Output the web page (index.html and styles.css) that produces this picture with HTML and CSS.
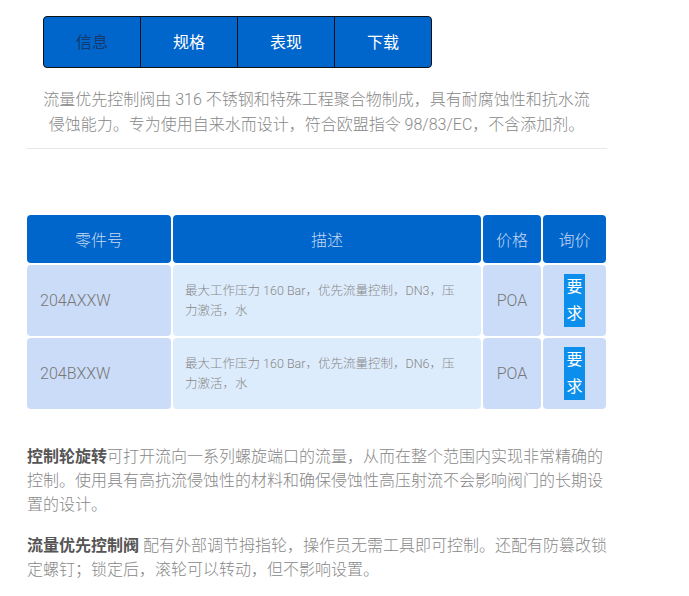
FILE: index.html
```html
<!DOCTYPE html>
<html lang="zh">
<head>
<meta charset="utf-8">
<title>流量优先控制阀</title>
<link rel="stylesheet" href="styles.css">
</head>
<body>
<div class="page">
  <nav class="tabs">
    <div class="tab active">信息</div>
    <div class="tab">规格</div>
    <div class="tab">表现</div>
    <div class="tab">下载</div>
  </nav>
  <p class="intro">流量优先控制阀由 316 不锈钢和特殊工程聚合物制成，具有耐腐蚀性和抗水流侵蚀能力。专为使用自来水而设计，符合欧盟指令 98/83/EC，不含添加剂。</p>
  <hr class="rule">
  <table class="parts">
    <thead>
      <tr>
        <th class="c-part">零件号</th>
        <th class="c-desc">描述</th>
        <th class="c-price">价格</th>
        <th class="c-ask">询价</th>
      </tr>
    </thead>
    <tbody>
      <tr>
        <td class="c-part">204AXXW</td>
        <td class="c-desc">最大工作压力 160 Bar，优先流量控制，DN3，压力激活，水</td>
        <td class="c-price">POA</td>
        <td class="c-ask"><span class="req">要求</span></td>
      </tr>
      <tr>
        <td class="c-part">204BXXW</td>
        <td class="c-desc">最大工作压力 160 Bar，优先流量控制，DN6，压力激活，水</td>
        <td class="c-price">POA</td>
        <td class="c-ask"><span class="req">要求</span></td>
      </tr>
    </tbody>
  </table>
  <p class="body-text"><strong>控制轮旋转</strong>可打开流向一系列螺旋端口的流量，从而在整个范围内实现非常精确的控制。使用具有高抗流侵蚀性的材料和确保侵蚀性高压射流不会影响阀门的长期设置的设计。</p>
  <p class="body-text"><strong>流量优先控制阀</strong> 配有外部调节拇指轮，操作员无需工具即可控制。还配有防篡改锁定螺钉；锁定后，滚轮可以转动，但不影响设置。</p>
</div>
</body>
</html>
```

FILE: styles.css
```css
html, body {
  margin: 0;
  padding: 0;
  background: #fff;
}
body {
  font-family: Roboto, "Noto Sans CJK SC", sans-serif;
  font-weight: 300;
  color: #888;
}
.page {
  padding: 16px 0 0 26px;
  width: 582px;
}
.tabs {
  display: flex;
  margin-left: 17px;
  width: 387px;
  height: 50px;
  border: 1px solid #111;
  border-radius: 4px;
  background: #0066cc;
  overflow: hidden;
}
.tab {
  flex: 1;
  display: flex;
  align-items: center;
  justify-content: center;
  padding-bottom: 3px;
  color: #fff;
  font-size: 16px;
  font-weight: 400;
  border-left: 1px solid #111;
}
.tab:first-child {
  border-left: none;
}
.tab.active {
  color: #14396e;
}
.intro {
  margin: 19px 0 11px;
  padding: 0 14px;
  width: 553px;
  text-align: center;
  font-size: 16px;
  line-height: 25px;
  color: #888;
}
.rule {
  margin: 0;
  border: none;
  border-top: 1px solid #e8e8e8;
  width: 581px;
}
.parts {
  margin: 64px 0 0 -1px;
  border-collapse: separate;
  border-spacing: 2px;
  width: 583px;
  table-layout: fixed;
}
.parts th, .parts td {
  border-radius: 4px;
}
.parts th {
  height: 48px;
  padding: 0;
  background: #0066cc;
  color: #c6d8f1;
  font-weight: 300;
  font-size: 16px;
  text-align: center;
}
.parts td {
  height: 71px;
  padding: 0;
  background: #cbdcf8;
  color: #777;
  font-size: 16px;
  vertical-align: middle;
}
.parts .c-part { width: 144px; }
.parts .c-desc { width: 308px; }
.parts .c-price { width: 58px; }
.parts .c-ask { width: 63px; }
.parts td.c-part {
  padding-left: 13px;
}
.parts td.c-desc {
  background: #ddecfc;
  font-size: 12.5px;
  line-height: 20px;
  color: #888;
  padding: 0 16px 0 12px;
}
.parts td.c-price,
.parts td.c-ask {
  text-align: center;
}
.req {
  display: inline-block;
  width: 21px;
  background: #0c8eec;
  color: #fff;
  font-size: 16px;
  font-weight: 400;
  line-height: 26.5px;
  text-align: center;
  vertical-align: middle;
}
.body-text {
  margin: 34px 0 0 1px;
  font-size: 16px;
  line-height: 24px;
  color: #888;
}
.body-text + .body-text {
  margin-top: 17px;
}
.body-text strong {
  color: #555;
  font-weight: 700;
}
```
